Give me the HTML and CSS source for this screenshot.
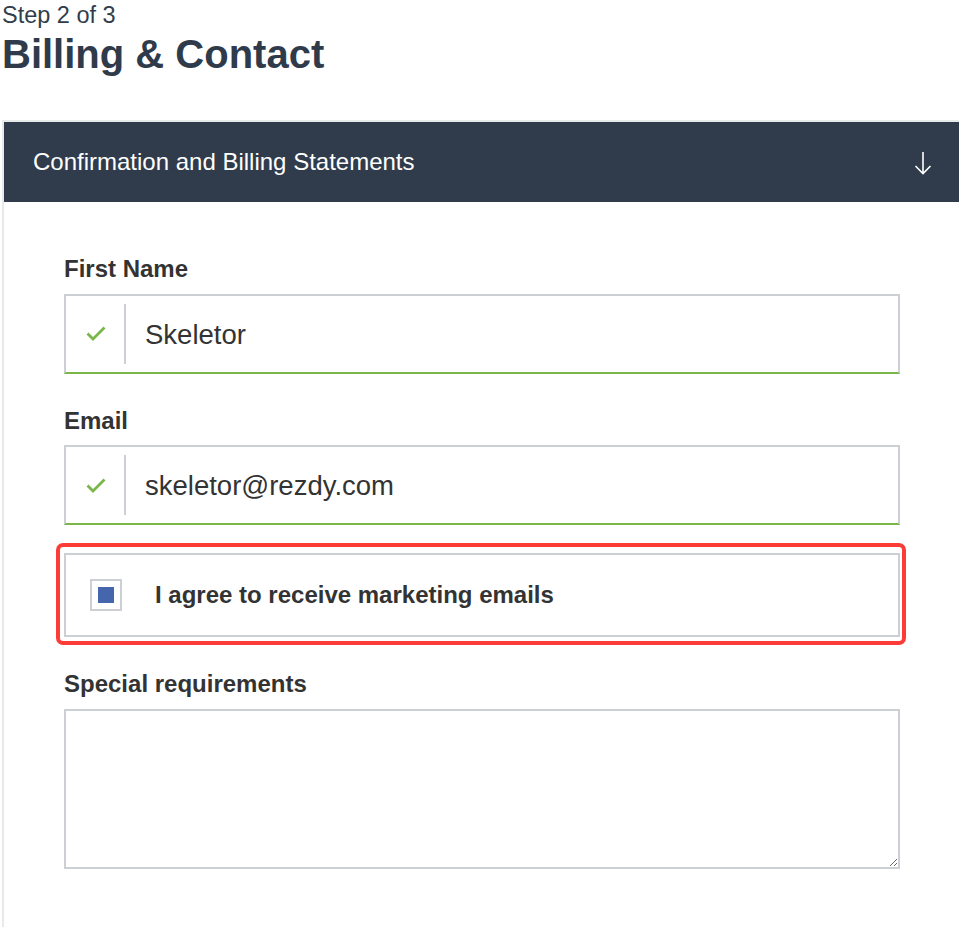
FILE: index.html
```html
<!DOCTYPE html>
<html lang="en">
<head>
<meta charset="utf-8">
<title>Billing &amp; Contact</title>
<link rel="stylesheet" href="styles.css">
</head>
<body>
<div class="page">
  <div class="step">Step 2 of 3</div>
  <h1 class="title">Billing &amp; Contact</h1>
  <section class="panel">
    <div class="panel-head">
      <span class="panel-title">Confirmation and Billing Statements</span>
      <svg class="arrow" width="18" height="24" viewBox="0 0 18 24" aria-hidden="true">
        <path d="M9 1 V22.5 M1.5 15 L9 22.5 L16.5 15" fill="none" stroke="#ffffff" stroke-width="1.6"/>
      </svg>
    </div>
    <form class="form">
      <div class="group">
        <label class="label" for="fn">First Name</label>
        <div class="field">
          <span class="field-icon">
            <svg width="20" height="15" viewBox="0 0 20 15" aria-hidden="true">
              <path d="M1.5 7.5 L7 13 L18.5 1.5" fill="none" stroke="#7ab648" stroke-width="2.8"/>
            </svg>
          </span>
          <span class="divider"></span>
          <input class="field-input" id="fn" type="text" value="Skeletor">
        </div>
      </div>
      <div class="group">
        <label class="label" for="em">Email</label>
        <div class="field">
          <span class="field-icon">
            <svg width="20" height="15" viewBox="0 0 20 15" aria-hidden="true">
              <path d="M1.5 7.5 L7 13 L18.5 1.5" fill="none" stroke="#7ab648" stroke-width="2.8"/>
            </svg>
          </span>
          <span class="divider"></span>
          <input class="field-input" id="em" type="text" value="skeletor@rezdy.com">
        </div>
      </div>
      <div class="group">
        <div class="consent">
          <span class="checkbox"><span class="checkbox-fill"></span></span>
          <span class="consent-text">I agree to receive marketing emails</span>
          <span class="highlight"></span>
        </div>
      </div>
      <div class="group">
        <label class="label" for="sr">Special requirements</label>
        <textarea class="textarea" id="sr"></textarea>
      </div>
    </form>
  </section>
</div>
</body>
</html>
```
FILE: styles.css
```css
html, body {
  margin: 0;
  padding: 0;
  background: #ffffff;
}

body {
  font-family: "Liberation Sans", Arial, Helvetica, sans-serif;
  color: #333333;
  overflow: hidden;
}

.page {
  min-height: 100vh;
  display: flex;
  flex-direction: column;
  padding-left: 2px;
  box-sizing: border-box;
}

.step {
  padding-top: 2px;
  font-size: 23.5px;
  line-height: 26px;
  color: #323d4b;
}

.title {
  margin: 4px 0 0;
  font-size: 40px;
  line-height: 45px;
  font-weight: bold;
  color: #2f3b4a;
}

.panel {
  flex: 1;
  margin-top: 43px;
  border-top: 2px solid #e6ebea;
  border-left: 2px solid #e6ebea;
}

.panel-head {
  height: 80px;
  background: #303c4b;
  display: flex;
  align-items: center;
  justify-content: space-between;
  padding: 0 27px 0 29px;
}

.panel-title {
  color: #ffffff;
  font-size: 24px;
  line-height: 1;
}

.arrow {
  display: block;
  margin-top: 1px;
}

.form {
  width: 836px;
  padding: 48px 0 0 60px;
}

.group {
  margin-bottom: 28px;
}

.label {
  display: block;
  padding-top: 5px;
  margin-bottom: 11px;
  font-size: 24px;
  line-height: 27.6px;
  font-weight: bold;
  color: #333333;
}

.field {
  height: 80px;
  box-sizing: border-box;
  border: 2px solid #ccd0d4;
  border-bottom-color: #7ab648;
  display: flex;
  align-items: stretch;
}

.field-icon {
  width: 58px;
  display: flex;
  align-items: center;
  justify-content: center;
  padding-left: 1px;
  box-sizing: border-box;
}

.field-icon svg {
  display: block;
}

.divider {
  width: 2px;
  margin: 8px 0;
  background: #ccd0d4;
}

.field-input {
  flex: 1;
  min-width: 0;
  border: 0;
  outline: 0;
  padding: 2px 0 0 19px;
  margin: 0;
  background: transparent;
  font-family: "Liberation Sans", Arial, Helvetica, sans-serif;
  font-size: 27.5px;
  color: #333333;
}

.consent {
  position: relative;
  height: 84px;
  box-sizing: border-box;
  border: 2px solid #ccd0d4;
  display: flex;
  align-items: center;
  padding-left: 24px;
}

.checkbox {
  width: 32px;
  height: 32px;
  box-sizing: border-box;
  border: 2px solid #ccd0d4;
  display: flex;
  align-items: center;
  justify-content: center;
}

.checkbox-fill {
  width: 16px;
  height: 16px;
  background: #4565ad;
}

.consent-text {
  margin-left: 33px;
  font-size: 24px;
  font-weight: bold;
  color: #333333;
}

.highlight {
  position: absolute;
  top: -12px;
  left: -10px;
  right: -8px;
  bottom: -10px;
  border: 4px solid #fb3c37;
  border-radius: 7px;
  pointer-events: none;
}

.textarea {
  display: block;
  width: 836px;
  height: 160px;
  box-sizing: border-box;
  border: 2px solid #ccd0d4;
  margin: 0;
  padding: 8px;
  font-family: "Liberation Sans", Arial, Helvetica, sans-serif;
  font-size: 20px;
  outline: 0;
}
```
